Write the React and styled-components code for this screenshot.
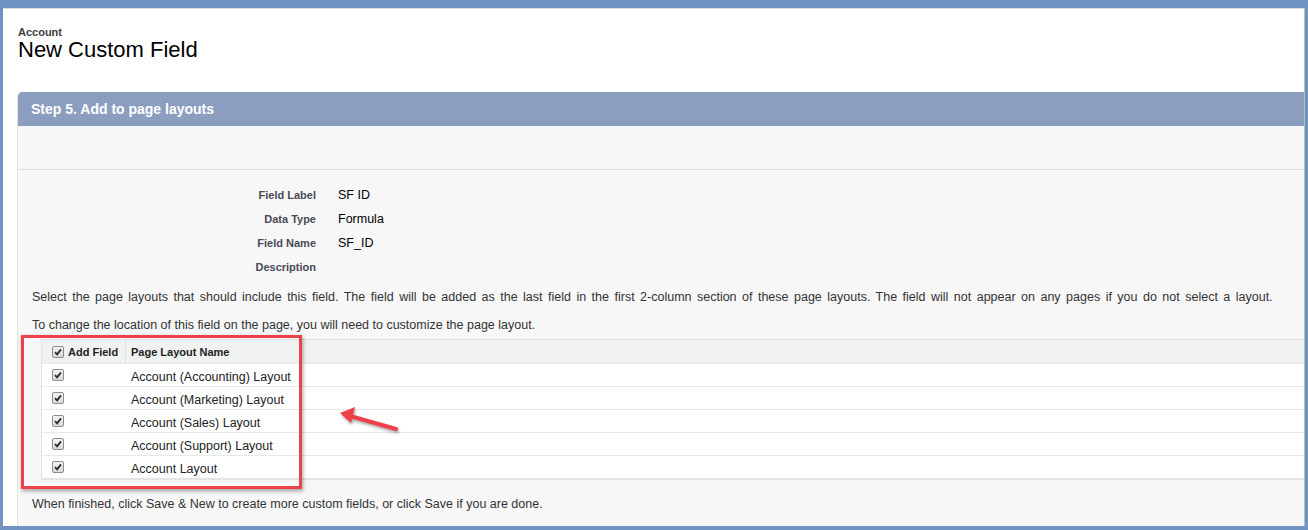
import React from "react";
import styled, { createGlobalStyle } from "styled-components";

const GlobalStyle = createGlobalStyle`
  html, body {
    margin: 0;
    padding: 0;
    background: #7094c1;
    font-family: "Liberation Sans", Arial, sans-serif;
  }
`;

const Frame = styled.div`
  position: relative;
  box-sizing: border-box;
  margin: 8px 3px 0 3px;
  height: 518px;
  background: #ffffff;
  border-top: 1px solid #d6dde6;
  border-right: 1px solid #b8bcc2;
  padding: 0 0 0 14px;
  overflow: hidden;
`;

const PageHeader = styled.div`
  padding: 17px 0 0 1px;
  height: 83px;
  box-sizing: border-box;
`;

const ObjectName = styled.div`
  font-size: 11px;
  font-weight: bold;
  color: #3e3e3c;
  line-height: 13px;
`;

const Title = styled.h1`
  margin: 0;
  font-size: 22px;
  font-weight: normal;
  color: #000;
  line-height: 22px;
`;

const Panel = styled.section`
  background: #f7f7f7;
  border-left: 1px solid #e3e3e3;
  border-top-left-radius: 5px;
  overflow: hidden;
  height: 434px;
`;

const PanelHeader = styled.div`
  height: 34px;
  background: #8c9ebf;
  color: #fff;
  font-size: 14px;
  font-weight: bold;
  display: flex;
  align-items: center;
  padding-left: 13px;
`;

const BlankBand = styled.div`
  height: 43px;
  border-bottom: 1px solid #dedede;
`;

const Details = styled.div`
  display: grid;
  grid-template-columns: 298px 1fr;
  column-gap: 22px;
  grid-auto-rows: 24px;
  padding-top: 13px;
  align-items: center;
`;

const DetailLabel = styled.div`
  text-align: right;
  font-size: 11px;
  font-weight: bold;
  color: #4a4a56;
`;

const DetailValue = styled.div`
  font-size: 12.5px;
  color: #000;
`;

const Note = styled.p`
  margin: 0;
  padding-left: 14px;
  font-size: 12.5px;
  color: #333;
  line-height: 14px;
  white-space: nowrap;
  margin-top: ${(p) => p.$top}px;
  word-spacing: ${(p) => p.$spread || 0}px;
`;

const LayoutTable = styled.div`
  margin: 7px 0 0 23px;
  background: #fff;
  border-left: 1px solid #e4e4e4;
  border-bottom: 2px solid #e4e4e4;
`;

const Row = styled.div`
  display: grid;
  grid-template-columns: 84px 1fr;
  height: ${(p) => (p.$head ? 23 : 22)}px;
  border-top: 1px solid ${(p) => (p.$head ? "#dcdfe2" : "#e8e8e8")};
  background: ${(p) => (p.$head ? "#f0f1f1" : "#fff")};
  align-items: stretch;
`;

const CheckCell = styled.div`
  display: flex;
  align-items: center;
  gap: 4px;
  padding-left: 10px;
  font-size: 11px;
  font-weight: bold;
  color: #222;
  border-right: ${(p) => (p.$head ? "1px solid #dcdfe2" : "none")};
`;

const NameCell = styled.div`
  display: flex;
  align-items: center;
  padding-left: 5px;
  padding-top: ${(p) => (p.$head ? 0 : 3)}px;
  font-size: ${(p) => (p.$head ? 11 : 12.5)}px;
  font-weight: ${(p) => (p.$head ? "bold" : "normal")};
  color: #222;
`;

const Box = styled.span`
  box-sizing: border-box;
  width: 12px;
  height: 12px;
  border: 1px solid #8d8d8d;
  border-radius: 2px;
  background: linear-gradient(#f4f4f4, #d9d9d9);
  display: inline-flex;
  align-items: center;
  justify-content: center;
  flex-shrink: 0;
`;

const Footer = styled.p`
  margin: 17px 0 0;
  padding-left: 14px;
  font-size: 12.5px;
  color: #333;
`;

const Highlight = styled.div`
  position: absolute;
  left: 18px;
  top: 326px;
  width: 275px;
  height: 148px;
  border: 3px solid #ee4149;
  box-shadow: 1px 2px 4px rgba(0, 0, 0, 0.35);
  pointer-events: none;
`;

const Pointer = styled.svg`
  position: absolute;
  left: 329px;
  top: 384px;
  overflow: visible;
  filter: drop-shadow(1px 2px 1.5px rgba(0, 0, 0, 0.35));
`;

const Check = () => (
  <Box>
    <svg width="8" height="8" viewBox="0 0 8 8">
      <path d="M1 4.2 L3.1 6.3 L7 1.4" fill="none" stroke="#2b2b2b" strokeWidth="1.8" />
    </svg>
  </Box>
);

const fields = [
  ["Field Label", "SF ID"],
  ["Data Type", "Formula"],
  ["Field Name", "SF_ID"],
  ["Description", ""],
];

const layouts = [
  "Account (Accounting) Layout",
  "Account (Marketing) Layout",
  "Account (Sales) Layout",
  "Account (Support) Layout",
  "Account Layout",
];

export default function App() {
  return (
    <>
      <GlobalStyle />
      <Frame>
        <PageHeader>
          <ObjectName>Account</ObjectName>
          <Title>New Custom Field</Title>
        </PageHeader>
        <Panel>
          <PanelHeader>Step 5. Add to page layouts</PanelHeader>
          <BlankBand />
          <Details>
            {fields.map(([label, value]) => (
              <React.Fragment key={label}>
                <DetailLabel>{label}</DetailLabel>
                <DetailValue>{value}</DetailValue>
              </React.Fragment>
            ))}
          </Details>
          <Note $top={11} $spread={2}>
            Select the page layouts that should include this field. The field will be added as the last field in the first 2-column section of these page layouts. The field will not appear on any pages if you do not select a layout.
          </Note>
          <Note $top={14}>
            To change the location of this field on the page, you will need to customize the page layout.
          </Note>
          <LayoutTable>
            <Row $head>
              <CheckCell $head>
                <Check />
                Add Field
              </CheckCell>
              <NameCell $head>Page Layout Name</NameCell>
            </Row>
            {layouts.map((name) => (
              <Row key={name}>
                <CheckCell>
                  <Check />
                </CheckCell>
                <NameCell>{name}</NameCell>
              </Row>
            ))}
          </LayoutTable>
          <Footer>
            When finished, click Save &amp; New to create more custom fields, or click Save if you are done.
          </Footer>
        </Panel>
        <Highlight />
        <Pointer width="70" height="40" viewBox="0 0 70 40">
          <line x1="64" y1="36" x2="18" y2="23" stroke="#ee4149" strokeWidth="4" strokeLinecap="round" />
          <polygon points="8,20 23,14 19,30" fill="#ee4149" />
        </Pointer>
      </Frame>
    </>
  );
}
